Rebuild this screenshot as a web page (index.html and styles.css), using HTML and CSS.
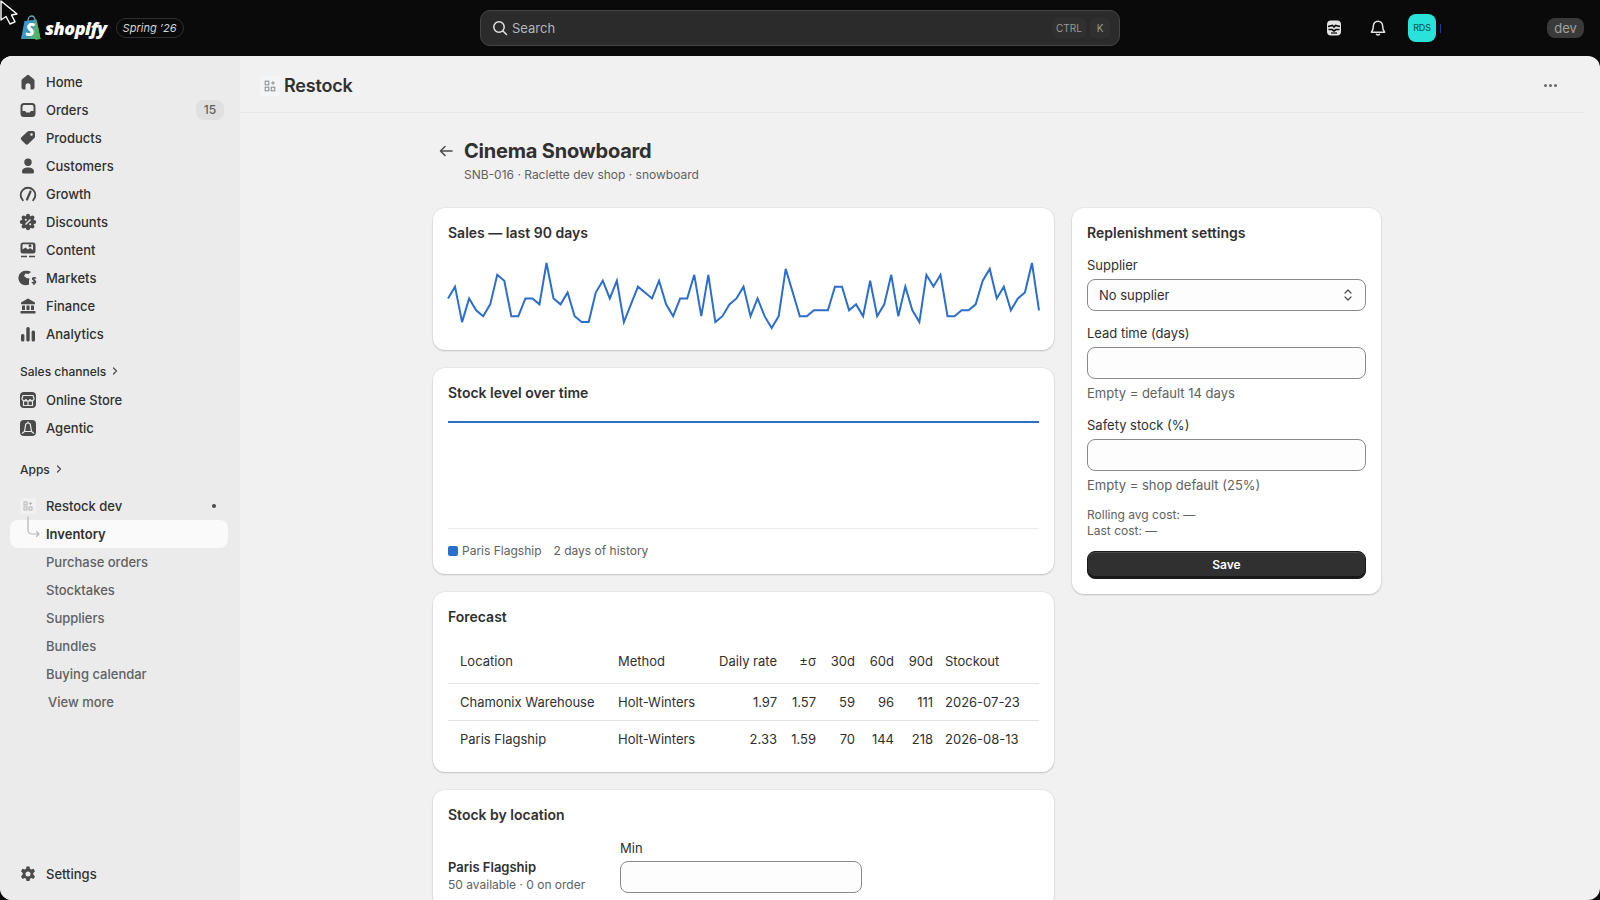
FILE: index.html
```html
<!DOCTYPE html>
<html>
<head>
    <title>Restock - Cinema Snowboard</title>
    <link rel="stylesheet" href="styles.css">
</head>
<body>
    <svg class="cursor" width="20" height="26" viewBox="0 0 20 26"><path d="M1 1V20L6 16.5L10 24L15 21.8L11.5 15L17 14Z" fill="#0a0a0a" stroke="#fff" stroke-width="1.4" stroke-linejoin="round"/></svg>

    <div class="topbar">
        <div class="brand">
            <svg class="brand-bag" width="22" height="26" viewBox="0 0 22 26">
                <defs><linearGradient id="bag" x1="0" y1="0" x2="1" y2="0.4"><stop offset="0" stop-color="#3d9be0"/><stop offset="0.55" stop-color="#3f93b8"/><stop offset="1" stop-color="#5cc06a"/></linearGradient></defs>
                <path d="M8 6C8 3 9.5 1 11.5 1S15 3 15 6" fill="none" stroke="#6aa8b8" stroke-width="1.3"/>
                <path d="M4.5 6L16.5 4.5L20.5 24L1 24Z" fill="url(#bag)"/>
                <path d="M16.5 4.5L20.5 24L15.5 25Z" fill="#4fb35a"/>
                <text x="5.5" y="21" class="brand-s">S</text>
            </svg>
            <span class="brand-name">shopify</span>
            <span class="brand-tag">Spring ’26</span>
        </div>
        <div class="search">
            <svg width="16" height="16" viewBox="0 0 16 16" fill="none" stroke="#e3e3e3" stroke-width="1.5" stroke-linecap="round"><circle cx="7" cy="7" r="5.2"/><path d="M11 11L14.5 14.5"/></svg>
            <span class="search-text">Search</span>
            <span class="kbd kbd-ctrl">CTRL</span>
            <span class="kbd">K</span>
        </div>
        <div class="top-actions">
            <svg class="top-icon" width="18" height="18" viewBox="0 0 18 18"><path d="M6 1.5h6a4 4 0 0 1 4 4v7a4 4 0 0 1-4 4H6a4 4 0 0 1-4-4v-7a4 4 0 0 1 4-4z" fill="#e3e3e3"/><path d="M3 7.5L7.500 6.500L9 8L10.500 6.500L15 7.500" fill="none" stroke="#0a0a0a" stroke-width="1.600"/><path d="M3.500 10.500H7L9 12L11 10.500H14.500" fill="none" stroke="#0a0a0a" stroke-width="1.600"/><path d="M6 14h6" stroke="#0a0a0a" stroke-width="1.200"/></svg>
            <svg class="top-icon bell" width="18" height="18" viewBox="0 0 18 18" fill="none" stroke="#e3e3e3" stroke-width="1.5" stroke-linejoin="round"><path d="M9 2.200a4.600 4.600 0 0 0-4.600 4.600c0 3.400-.6 4.600-2 6.400h13.200c-1.400-1.800-2-3-2-6.400A4.600 4.600 0 0 0 9 2.200z"/><path d="M7.200 14.800a1.900 1.900 0 0 0 3.600 0"/></svg>
            <span class="avatar">RDS</span>
            <span class="avatar-caret"></span>
        </div>
        <span class="dev-badge">dev</span>
    </div>

    <div class="shell">
        <nav class="sidebar">
            <a class="nav-row"><svg class="nav-icon" viewBox="0 0 20 20"><path d="M9 3.200a1.600 1.600 0 0 1 2 0l4.600 3.700c.6.4.9 1 .9 1.700v6.900a2 2 0 0 1-2 2H12.500v-3.800a2.500 2.500 0 0 0-5 0v3.800H5.500a2 2 0 0 1-2-2V8.600c0-.7.3-1.300.9-1.700z"/></svg>Home</a>
            <a class="nav-row"><svg class="nav-icon" viewBox="0 0 20 20"><path fill-rule="evenodd" d="M6 3h8a3.500 3.500 0 0 1 3.500 3.500v7A3.500 3.500 0 0 1 14 17H6a3.500 3.500 0 0 1-3.500-3.500v-7A3.500 3.500 0 0 1 6 3zM4.500 6.500V11h2.700l1 1.500h3.600l1-1.500h2.700V6.500A1.500 1.500 0 0 0 14 5H6a1.500 1.500 0 0 0-1.500 1.500z"/></svg>Orders<span class="nav-count">15</span></a>
            <a class="nav-row"><svg class="nav-icon" viewBox="0 0 20 20"><path fill-rule="evenodd" d="M11.500 3H15a2 2 0 0 1 2 2v3.500a2 2 0 0 1-.6 1.400l-6.200 6.200a2 2 0 0 1-2.800 0l-4-4a2 2 0 0 1 0-2.800L9.600 3.600A2.700 2.700 0 0 1 11.500 3zM13.500 5.200a1.300 1.300 0 1 0 0 2.600 1.300 1.300 0 0 0 0-2.600z"/></svg>Products</a>
            <a class="nav-row"><svg class="nav-icon" viewBox="0 0 20 20"><circle cx="10" cy="6.200" r="3.700"/><path d="M4 15.500c0-2.600 2.700-4 6-4s6 1.400 6 4V16a1.500 1.500 0 0 1-1.500 1.500h-9A1.500 1.500 0 0 1 4 16z"/></svg>Customers</a>
            <a class="nav-row"><svg class="nav-icon" viewBox="0 0 20 20"><path d="M4.800 16.200A7.300 7.300 0 1 1 15.200 16.200" fill="none" stroke="#4a4a4a" stroke-width="1.900" stroke-linecap="round"/><path d="M9 15.500L12.500 7.500" stroke="#4a4a4a" stroke-width="2.200" stroke-linecap="round"/></svg>Growth</a>
            <a class="nav-row"><svg class="nav-icon" viewBox="0 0 20 20"><circle cx="10" cy="10" r="6.300"/><circle cx="10" cy="3.800" r="2"/><circle cx="10" cy="16.200" r="2"/><circle cx="3.800" cy="10" r="2"/><circle cx="16.200" cy="10" r="2"/><circle cx="5.600" cy="5.600" r="2"/><circle cx="14.400" cy="5.600" r="2"/><circle cx="5.600" cy="14.400" r="2"/><circle cx="14.400" cy="14.400" r="2"/><path d="M7.500 12.500L12.500 7.500" stroke="#ebebeb" stroke-width="1.400"/><circle cx="7.800" cy="7.800" r="1" fill="#ebebeb"/><circle cx="12.200" cy="12.200" r="1" fill="#ebebeb"/></svg>Discounts</a>
            <a class="nav-row"><svg class="nav-icon" viewBox="0 0 20 20"><path fill-rule="evenodd" d="M5 2.500h10a2.500 2.500 0 0 1 2.500 2.500v6a2.500 2.500 0 0 1-2.500 2.500H5A2.500 2.500 0 0 1 2.500 11V5A2.500 2.500 0 0 1 5 2.500zM4.500 9.500l3-2 2.500 2 2-1.500 3 2V5a.8.8 0 0 0-.8-.8h-2.200a1.500 1.500 0 1 0 0 3 1.500 1.500 0 0 0 0-3H5.300a.8.8 0 0 0-.8.8z"/><path d="M3 15.800h6v1.500H3zM11 15.800h6v1.500h-6z"/></svg>Content</a>
            <a class="nav-row"><svg class="nav-icon" viewBox="0 0 20 20"><path d="M9 2.800a7.300 7.300 0 0 1 4 1.200L10.500 6 7.500 5.500 6 8l2.500 2 3 .5-.5 2.500v3.500a7.300 7.300 0 1 1-2-13.700z"/><path d="M18 10.500c-.5-1-3-1.200-3.500.1-.5 1.600 3.500 1.500 3.200 3.400-.3 1.500-3.100 1.400-3.800.1M16 9v8" fill="none" stroke="#4a4a4a" stroke-width="1.300"/></svg>Markets</a>
            <a class="nav-row"><svg class="nav-icon" viewBox="0 0 20 20"><path d="M10 2.500L17 6.500V8.200H3V6.500zM4 9.500H7V14H4zM8.500 9.500h3V14h-3zM13 9.500h3V14h-3zM3 15h14a.5.5 0 0 1 .5.5V17.500h-15V15.500A.5.5 0 0 1 3 15z"/></svg>Finance</a>
            <a class="nav-row"><svg class="nav-icon" viewBox="0 0 20 20"><rect x="3" y="10" width="3.400" height="7.500" rx="1.500"/><rect x="8.300" y="3" width="3.400" height="14.500" rx="1.500"/><rect x="13.600" y="6.500" width="3.400" height="11" rx="1.500"/></svg>Analytics</a>

            <div class="nav-label first-label">Sales channels <svg width="10" height="10" viewBox="0 0 10 10" fill="none" stroke="#4a4a4a" stroke-width="1.200" stroke-linecap="round" stroke-linejoin="round"><path d="M3.500 2L6.500 5L3.500 8"/></svg></div>
            <a class="nav-row"><svg class="nav-icon" viewBox="0 0 20 20"><rect x="2" y="2" width="16" height="16" rx="4"/><path d="M5 5.500h10l1 3a2 2 0 0 1-4 .5 2 2 0 0 1-4 0 2 2 0 0 1-4-.5zM5.500 11h9v4.500h-9z" fill="none" stroke="#ebebeb" stroke-width="1.200"/><path d="M10 11v4.500" stroke="#ebebeb" stroke-width="1.200"/></svg>Online Store</a>
            <a class="nav-row"><svg class="nav-icon" viewBox="0 0 20 20"><rect x="2" y="2" width="16" height="16" rx="4"/><path d="M7.500 7.500a2.500 2.500 0 0 1 5 0l1 6h-7z" fill="none" stroke="#ebebeb" stroke-width="1.200"/><path d="M4 15.500l2.500-2M16 15.500l-2.500-2M10 3.500v1.500" stroke="#ebebeb" stroke-width="1.200"/></svg>Agentic</a>

            <div class="nav-label apps-label">Apps <svg width="10" height="10" viewBox="0 0 10 10" fill="none" stroke="#4a4a4a" stroke-width="1.200" stroke-linecap="round" stroke-linejoin="round"><path d="M3.500 2L6.500 5L3.500 8"/></svg></div>
            <div class="app-group">
                <svg class="tree-line" width="14" height="24" viewBox="0 0 14 24" fill="none" stroke="#b5b5b5" stroke-width="1.200" stroke-linecap="round" stroke-linejoin="round"><path d="M1 1V14a4 4 0 0 0 4 4H12M9.500 15.500L12 18L9.500 20.500"/></svg>
                <a class="nav-row app-row"><span class="app-icon"><svg width="10" height="10" viewBox="0 0 10 10" fill="none" stroke="#b5b5b5" stroke-width="1"><rect x="1" y="1" width="3" height="3"/><rect x="1" y="6" width="3" height="3"/><rect x="6" y="6" width="3" height="3"/><path d="M7.500 1v3M6 2.500h3"/></svg></span>Restock dev<span class="app-dot"></span></a>
                <a class="nav-row sub-row active">Inventory</a>
                <a class="nav-row sub-row">Purchase orders</a>
                <a class="nav-row sub-row">Stocktakes</a>
                <a class="nav-row sub-row">Suppliers</a>
                <a class="nav-row sub-row">Bundles</a>
                <a class="nav-row sub-row">Buying calendar</a>
                <a class="nav-row sub-row more-row">View more</a>
            </div>
            <a class="nav-row settings-row"><svg class="nav-icon" viewBox="0 0 20 20"><path fill-rule="evenodd" d="M8.500 2.500h3l.5 2.300 1.300.7 2.200-.8 1.500 2.600-1.700 1.600v1.800l1.700 1.600-1.500 2.600-2.200-.8-1.300.7-.5 2.300h-3L8 14.800l-1.300-.7-2.200.8L3 12.300l1.700-1.600V8.900L3 7.300l1.500-2.600 2.200.8L8 4.800zM10 7.400a2.500 2.500 0 1 0 0 5 2.500 2.500 0 0 0 0-5z"/></svg>Settings</a>
        </nav>

        <main class="main">
            <div class="app-header">
                <span class="header-icon"><svg width="12" height="12" viewBox="0 0 10 10" fill="none" stroke="#8c9196" stroke-width="0.900"><rect x="1" y="1" width="3" height="3"/><rect x="1" y="6" width="3" height="3"/><rect x="6" y="6" width="3" height="3"/><path d="M7.500 1v3M6 2.500h3"/></svg></span>
                <span class="header-title">Restock</span>
                <span class="header-more"><i></i><i></i><i></i></span>
            </div>

            <div class="page">
                <div class="page-head">
                    <svg class="back" width="16" height="16" viewBox="0 0 16 16" fill="none" stroke="#4a4a4a" stroke-width="1.500" stroke-linecap="round" stroke-linejoin="round"><path d="M14 8H2.500M7 3.500L2.500 8L7 12.500"/></svg>
                    <div>
                        <h1>Cinema Snowboard</h1>
                        <p class="page-sub">SNB-016 · Raclette dev shop · snowboard</p>
                    </div>
                </div>

                <div class="columns">
                    <div class="col-main">
                        <section class="card sales-card">
                            <h2>Sales — last 90 days</h2>
                            <svg class="sparkline" viewBox="0 0 84 11" preserveAspectRatio="none">
                                <polyline vector-effect="non-scaling-stroke" points="0,6 1,4 2,10 3,6 4,8 5,9 6,7 7,2 8,3 9,9 10,9 11,6 12,6 13,7 14,0 15,6 16,7 17,5 18,9 19,10 20,10 21,5 22,3 23,6 24,3 25,10 26,7 27,4 28,5 29,6 30,3 31,7 32,9 33,6 34,6 35,2 36,9 37,2 38,10 39,9 40,7 41,6 42,4 43,9 44,6 45,9 46,11 47,9 48,1 49,5 50,9 51,9 52,8 53,8 54,8 55,4 56,4 57,8 58,7 59,9 60,3 61,9 62,7 63,2 64,9 65,4 66,8 67,10 68,2 69,4 70,2 71,9 72,9 73,8 74,8 75,7 76,3 77,1 78,6 79,4 80,8 81,6 82,5 83,0 84,8"/>
                            </svg>
                        </section>

                        <section class="card stock-card">
                            <h2>Stock level over time</h2>
                            <div class="stock-chart"><div class="stock-line"></div></div>
                            <div class="legend">
                                <span class="legend-swatch"></span>
                                <span class="legend-name">Paris Flagship</span>
                                <span>2 days of history</span>
                            </div>
                        </section>

                        <section class="card forecast-card">
                            <h2>Forecast</h2>
                            <table class="forecast">
                                <colgroup><col class="c-loc"><col class="c-method"><col class="c-rate"><col class="c-sigma"><col class="c-d30"><col class="c-d60"><col class="c-d90"><col></colgroup>
                                <thead>
                                    <tr><th>Location</th><th>Method</th><th class="num">Daily rate</th><th class="num">±σ</th><th class="num">30d</th><th class="num">60d</th><th class="num">90d</th><th>Stockout</th></tr>
                                </thead>
                                <tbody>
                                    <tr><td>Chamonix Warehouse</td><td>Holt-Winters</td><td class="num">1.97</td><td class="num">1.57</td><td class="num">59</td><td class="num">96</td><td class="num">111</td><td>2026-07-23</td></tr>
                                    <tr><td>Paris Flagship</td><td>Holt-Winters</td><td class="num">2.33</td><td class="num">1.59</td><td class="num">70</td><td class="num">144</td><td class="num">218</td><td>2026-08-13</td></tr>
                                </tbody>
                            </table>
                        </section>

                        <section class="card location-card">
                            <h2>Stock by location</h2>
                            <div class="location-row">
                                <div class="location-name">
                                    <strong>Paris Flagship</strong>
                                    <span>50 available · 0 on order</span>
                                </div>
                                <div class="location-min">
                                    <label>Min</label>
                                    <input type="text">
                                </div>
                            </div>
                        </section>
                    </div>

                    <aside class="col-side">
                        <section class="card settings-card">
                            <h2>Replenishment settings</h2>
                            <div class="field">
                                <label>Supplier</label>
                                <div class="select-wrap">
                                    <select><option>No supplier</option></select>
                                    <svg width="14" height="18" viewBox="0 0 14 18" fill="none" stroke="#4a4a4a" stroke-width="1.200" stroke-linecap="round" stroke-linejoin="round"><path d="M4 7L7 4L10 7M4 11L7 14L10 11"/></svg>
                                </div>
                            </div>
                            <div class="field">
                                <label>Lead time (days)</label>
                                <input type="text">
                                <p class="help">Empty = default 14 days</p>
                            </div>
                            <div class="field">
                                <label>Safety stock (%)</label>
                                <input type="text">
                                <p class="help">Empty = shop default (25%)</p>
                            </div>
                            <p class="cost-line first-cost">Rolling avg cost: —</p>
                            <p class="cost-line">Last cost: —</p>
                            <button type="button" class="save">Save</button>
                        </section>
                    </aside>
                </div>
            </div>
        </main>
    </div>
</body>
</html>
```

FILE: styles.css
```css
* {
    box-sizing: border-box;
}
body {
    margin: 0;
    height: 900px;
    overflow: hidden;
    background: #0a0a0a;
    font-family: Inter, "Noto Sans", sans-serif;
    font-size: 13px;
    color: #303030;
}
.cursor {
    position: absolute;
    left: 0;
    top: 0;
    z-index: 10;
}

/* top bar */
.topbar {
    height: 56px;
    display: flex;
    align-items: center;
    padding-left: 20px;
    position: relative;
}
.brand {
    display: flex;
    align-items: center;
    width: 460px;
}
.brand-bag {
    margin-right: 3px;
}
.brand-s {
    font-family: "Open Sans", sans-serif;
    font-size: 17px;
    font-weight: 800;
    font-style: italic;
    fill: #fff;
}
.brand-name {
    font-family: "Open Sans", sans-serif;
    font-size: 18px;
    font-weight: 800;
    font-style: italic;
    color: #fff;
    letter-spacing: -0.5px;
}
.brand-tag {
    margin-left: 9px;
    height: 20px;
    line-height: 18px;
    padding: 0 6px;
    border: 1px solid #2f2f2f;
    border-radius: 10px;
    font-size: 11px;
    font-style: italic;
    color: #d4d4d4;
}
.search {
    width: 640px;
    height: 36px;
    display: flex;
    align-items: center;
    gap: 4px;
    padding: 0 9px 0 11px;
    background: #2b2b2b;
    border: 1px solid #444;
    border-radius: 10px;
}
.search-text {
    flex: 1;
    color: #b5b5b5;
}
.kbd {
    width: 20px;
    height: 20px;
    line-height: 20px;
    text-align: center;
    background: #303030;
    border-radius: 5px;
    font-size: 10px;
    color: #9a9a9a;
}
.kbd-ctrl {
    width: 34px;
}
.top-actions {
    display: flex;
    align-items: center;
    margin-left: 205px;
}
.top-icon {
    flex: none;
}
.bell {
    margin-left: 26px;
}
.avatar {
    margin-left: 21px;
    width: 28px;
    height: 28px;
    line-height: 28px;
    text-align: center;
    background: #29e3da;
    border-radius: 8px;
    font-size: 9px;
    font-weight: 500;
    color: #0f5f5c;
    letter-spacing: -0.2px;
}
.avatar-caret {
    width: 1px;
    height: 9px;
    margin-left: 4px;
    background: #1d3f8f;
}
.dev-badge {
    position: absolute;
    left: 1547px;
    top: 18px;
    width: 37px;
    height: 20px;
    line-height: 20px;
    text-align: center;
    background: #3a3a3a;
    border-radius: 8px;
    color: #a0a0a0;
}

/* page frame */
.shell {
    height: 844px;
    display: flex;
    border-radius: 12px;
    overflow: hidden;
    background: #f1f1f1;
}

/* sidebar */
.sidebar {
    width: 240px;
    flex: none;
    display: flex;
    flex-direction: column;
    padding: 12px 0;
    background: #ebebeb;
}
.nav-row {
    display: flex;
    align-items: center;
    height: 28px;
    margin: 0 12px 0 10px;
    padding-left: 8px;
    border-radius: 8px;
    font-weight: 500;
    color: #303030;
}
.nav-icon {
    width: 20px;
    height: 20px;
    margin-right: 8px;
    fill: #4a4a4a;
    flex: none;
}
.nav-count {
    margin-left: auto;
    margin-right: 4px;
    width: 28px;
    height: 20px;
    line-height: 20px;
    text-align: center;
    background: #e0e0e0;
    border-radius: 8px;
    font-size: 12px;
    color: #616161;
}
.nav-label {
    display: flex;
    align-items: center;
    gap: 4px;
    height: 20px;
    padding-left: 20px;
    font-size: 12px;
    font-weight: 500;
    color: #303030;
}
.first-label {
    margin-top: 13px;
    margin-bottom: 5px;
}
.apps-label {
    margin-top: 17px;
    margin-bottom: 13px;
}
.app-group {
    position: relative;
}
.tree-line {
    position: absolute;
    left: 27px;
    top: 24px;
    z-index: 1;
}
.app-icon {
    width: 16px;
    height: 16px;
    margin: 0 10px 0 2px;
    display: flex;
    align-items: center;
    justify-content: center;
    background: #f1f1f1;
    border-radius: 4px;
}
.app-dot {
    width: 4px;
    height: 4px;
    margin-left: auto;
    margin-right: 12px;
    border-radius: 50%;
    background: #4a4a4a;
}
.sub-row {
    padding-left: 36px;
    font-weight: 450;
    color: #616161;
    margin-right: 12px;
}
.sub-row.active {
    background: #fafafa;
    font-weight: 600;
    color: #303030;
}
.more-row {
    padding-left: 38px;
}
.settings-row {
    margin-top: auto;
}

/* main column */
.main {
    flex: 1;
    min-width: 0;
    overflow: hidden;
}
.app-header {
    display: flex;
    align-items: center;
    height: 57px;
    margin-right: 16px;
    padding: 3px 27px 0 20px;
    border-bottom: 1px solid #e8e8e8;
}
.header-icon {
    width: 20px;
    height: 20px;
    margin-right: 4px;
    display: flex;
    align-items: center;
    justify-content: center;
    background: #f4f5f7;
    border-radius: 4px;
}
.header-title {
    font-size: 18px;
    font-weight: 600;
    letter-spacing: -0.2px;
    color: #303030;
}
.header-more {
    margin-left: auto;
    display: flex;
    gap: 2px;
}
.header-more i {
    width: 3px;
    height: 3px;
    border-radius: 50%;
    background: #6b6b6b;
}
.page {
    padding-left: 193px;
    width: 1141px;
}
.page-head {
    display: flex;
    padding: 24px 0 25px 5px;
}
.back {
    margin: 6px 10px 0 0;
    flex: none;
}
h1 {
    margin: 0;
    font-size: 20px;
    line-height: 28px;
    font-weight: 700;
    letter-spacing: -0.2px;
    color: #303030;
}
.page-sub {
    margin: 2px 0 0;
    font-size: 12px;
    line-height: 16px;
    color: #616161;
}
.columns {
    display: flex;
    gap: 18px;
    align-items: flex-start;
}
.col-main {
    width: 621px;
    flex: none;
}
.col-side {
    width: 309px;
    flex: none;
}
.card {
    padding: 15px;
    margin-bottom: 18px;
    background: #fff;
    border-radius: 12px;
    box-shadow: 0 0 0 1px rgba(0, 0, 0, 0.03), 0 1px 2px rgba(0, 0, 0, 0.18);
}
h2 {
    margin: 0;
    font-size: 14px;
    line-height: 20px;
    font-weight: 600;
    color: #303030;
}

/* charts */
.sparkline {
    display: block;
    width: 100%;
    height: 65px;
    margin: 20px 0 7px;
    overflow: visible;
}
.sparkline polyline {
    fill: none;
    stroke: #2c6ecb;
    stroke-width: 2px;
}
.stock-card {
    padding-bottom: 13px;
}
.stock-chart {
    height: 108px;
    margin-top: 18px;
    border-bottom: 1px solid #ebebeb;
}
.stock-line {
    height: 2px;
    background: #2c6ecb;
}
.legend {
    display: flex;
    align-items: center;
    margin-top: 12px;
    line-height: 20px;
    font-size: 12px;
    color: #616161;
}
.legend-swatch {
    width: 10px;
    height: 10px;
    margin-right: 4px;
    border-radius: 2px;
    background: #2c6ecb;
}
.legend-name {
    margin-right: 12px;
}

/* forecast table */
.forecast {
    width: 100%;
    margin-top: 13px;
    border-collapse: collapse;
    table-layout: fixed;
}
.forecast th,
.forecast td {
    padding: 0 6px;
    font-weight: 400;
    text-align: left;
    white-space: nowrap;
    color: #303030;
}
.forecast th {
    height: 43px;
}
.forecast td {
    height: 37px;
    padding-top: 1px;
    border-top: 1px solid #e3e3e3;
}
.forecast th:first-child,
.forecast td:first-child {
    padding-left: 12px;
}
.forecast .num {
    text-align: right;
}
.c-loc { width: 164px; }
.c-method { width: 100px; }
.c-rate { width: 71px; }
.c-sigma { width: 39px; }
.c-d30 { width: 39px; }
.c-d60 { width: 39px; }
.c-d90 { width: 39px; }

/* stock by location */
.location-row {
    display: flex;
    align-items: flex-end;
    margin-top: 13px;
}
.location-name {
    width: 172px;
    flex: none;
    line-height: 20px;
}
.location-name strong {
    display: block;
    font-weight: 600;
}
.location-name span {
    display: block;
    line-height: 16px;
    font-size: 12px;
    color: #616161;
}
.location-min {
    width: 242px;
}
.location-min label {
    display: block;
    margin-bottom: 3px;
    line-height: 20px;
}

/* form bits */
input,
select {
    display: block;
    width: 100%;
    height: 32px;
    padding: 0 11px;
    font-family: inherit;
    font-size: 13px;
    color: #303030;
    background: #fdfdfd;
    border: 1px solid #8a8a8a;
    border-radius: 8px;
    appearance: none;
}
.field {
    margin-top: 12px;
}
.field label {
    display: block;
    margin-bottom: 4px;
    line-height: 20px;
}
.select-wrap {
    position: relative;
}
.select-wrap svg {
    position: absolute;
    right: 11px;
    top: 7px;
}
.help {
    margin: 5px 0 0;
    line-height: 19px;
    color: #616161;
}
.cost-line {
    margin: 0;
    font-size: 12px;
    line-height: 16px;
    color: #616161;
}
.first-cost {
    margin-top: 12px;
}
.save {
    display: block;
    width: 100%;
    height: 28px;
    margin-top: 12px;
    padding: 0 0 2px;
    font-family: inherit;
    font-size: 12px;
    font-weight: 600;
    color: #fff;
    background: #303030;
    border: 1px solid #1a1a1a;
    border-radius: 8px;
    box-shadow: inset 0 1px 0 rgba(255, 255, 255, 0.12), inset 0 -2px 0 rgba(0, 0, 0, 0.5);
}
```
